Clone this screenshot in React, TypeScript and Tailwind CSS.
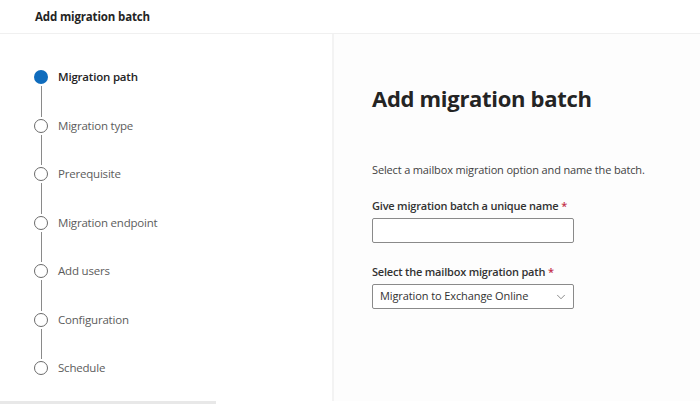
import { ChevronDown } from 'lucide-react';

const steps = [
  'Migration path',
  'Migration type',
  'Prerequisite',
  'Migration endpoint',
  'Add users',
  'Configuration',
  'Schedule',
];

function StepList() {
  return (
    <div className="flex flex-col">
      {steps.map((label, i) => (
        <div key={label} className="flex flex-col">
          <div className="flex h-[14px] items-center gap-[10px]">
            {i === 0 ? (
              <span className="h-[14px] w-[14px] rounded-full bg-[#0f6cbd]" />
            ) : (
              <span className="h-[14px] w-[14px] rounded-full border-[1.5px] border-[#6b6b6b] bg-white" />
            )}
            <span
              className={
                i === 0
                  ? 'text-[11.5px] font-semibold tracking-[-0.2px] text-[#242424]'
                  : 'text-[11.5px] tracking-[-0.2px] text-[#5c5c5c]'
              }
            >
              {label}
            </span>
          </div>
          {i < steps.length - 1 && (
            <div className="ml-[6.5px] my-[2px] h-[30.5px] w-px bg-[#8a8a8a]" />
          )}
        </div>
      ))}
    </div>
  );
}

export default function App() {
  return (
    <div className="flex h-[404px] w-[700px] flex-col overflow-hidden bg-white font-['Open_Sans','Noto_Sans',sans-serif] text-[#242424]">
      <header className="flex h-[34px] shrink-0 items-center border-b border-[#f0f0f0] pl-[35px]">
        <h1 className="text-[11.5px] font-bold tracking-[-0.15px]">Add migration batch</h1>
      </header>

      <div className="flex flex-1">
        <aside className="w-[334px] shrink-0 border-r-2 border-[#f3f3f3] pl-[34px] pt-[36px]">
          <StepList />
        </aside>

        <main className="flex-1 bg-[#fdfdfd] pl-[38px] pt-[48px]">
          <h2 className="text-[22px] font-bold leading-[32px] tracking-[-0.3px] text-[#242424]">
            Add migration batch
          </h2>

          <p className="mt-[48px] text-[11px] leading-[16px] tracking-[-0.15px] text-[#424242]">
            Select a mailbox migration option and name the batch.
          </p>

          <label className="mt-[20px] block text-[11px] font-semibold leading-[16px] tracking-[-0.2px] text-[#323232]">
            Give migration batch a unique name <span className="text-[#c4314b]">*</span>
          </label>
          <div className="mt-[4px] h-[25px] w-[202px] rounded-[2px] border border-[#8a8a8a] bg-white" />

          <label className="mt-[21px] block text-[11px] font-semibold leading-[16px] tracking-[-0.2px] text-[#323232]">
            Select the mailbox migration path <span className="text-[#c4314b]">*</span>
          </label>
          <div className="mt-[4px] flex h-[25px] w-[202px] items-center justify-between rounded-[2px] border border-[#8a8a8a] bg-white pl-[7px] pr-[5px]">
            <span className="text-[11px] tracking-[-0.1px] text-[#323232]">Migration to Exchange Online</span>
            <ChevronDown className="h-[14px] w-[14px] text-[#616161]" strokeWidth={1.25} />
          </div>
        </main>
      </div>

      <div className="h-[3px] w-[216px] shrink-0 bg-[#e8e8e8]" />
    </div>
  );
}
